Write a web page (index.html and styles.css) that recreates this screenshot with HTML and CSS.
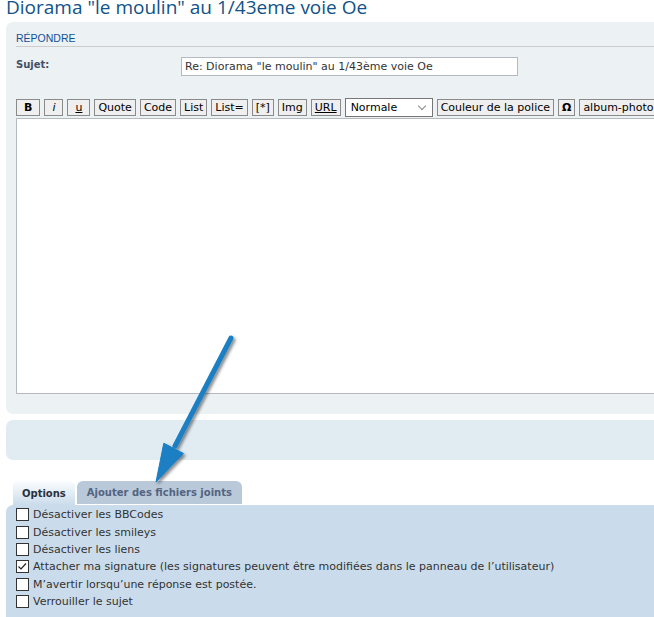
FILE: index.html
```html
<!DOCTYPE html>
<html lang="fr">
<head>
    <meta charset="UTF-8">
    <title>Répondre</title>
    <link rel="stylesheet" href="styles.css">
</head>
<body>
<div class="page">
    <h2 class="topic-title">Diorama "le moulin" au 1/43eme voie Oe</h2>

    <div class="panel post-panel">
        <h3>Répondre</h3>
        <div class="subject-row">
            <label for="subject">Sujet:</label>
            <input type="text" id="subject" class="inputbox" value="Re: Diorama &quot;le moulin&quot; au 1/43ème voie Oe">
        </div>
        <div class="toolbar">
            <button class="bb bb-b">B</button>
            <button class="bb bb-i">i</button>
            <button class="bb bb-u">u</button>
            <button class="bb">Quote</button>
            <button class="bb">Code</button>
            <button class="bb">List</button>
            <button class="bb">List=</button>
            <button class="bb">[*]</button>
            <button class="bb">Img</button>
            <button class="bb bb-url">URL</button>
            <div class="size-select">Normale<span class="chev"></span></div>
            <button class="bb">Couleur de la police</button>
            <button class="bb bb-omega">Ω</button>
            <button class="bb">album-photo</button>
        </div>
        <textarea class="message"></textarea>
    </div>

    <div class="panel submit-panel"></div>

    <ul class="tabs">
        <li class="tab active">Options</li>
        <li class="tab">Ajouter des fichiers joints</li>
    </ul>
    <div class="options-panel">
        <div class="opt"><span class="check"></span>Désactiver les BBCodes</div>
        <div class="opt"><span class="check"></span>Désactiver les smileys</div>
        <div class="opt"><span class="check"></span>Désactiver les liens</div>
        <div class="opt"><span class="check"><svg viewBox="0 0 13 13" width="13" height="13"><path d="M2.5 6.5 L5 9 L10 3.5" fill="none" stroke="#222" stroke-width="1.2"/></svg></span>Attacher ma signature (les signatures peuvent être modifiées dans le panneau de l’utilisateur)</div>
        <div class="opt"><span class="check"></span>M’avertir lorsqu’une réponse est postée.</div>
        <div class="opt"><span class="check"></span>Verrouiller le sujet</div>
    </div>
</div>

<!-- annotation arrow drawn over the page -->
<svg class="arrow" width="654" height="617" viewBox="0 0 654 617">
    <defs>
        <filter id="shadow" x="-50%" y="-50%" width="200%" height="200%">
            <feDropShadow dx="2" dy="2" stdDeviation="1.8" flood-color="#000" flood-opacity="0.45"/>
        </filter>
    </defs>
    <g filter="url(#shadow)" fill="#1a7fc4" stroke="#1a7fc4">
        <line x1="231" y1="338" x2="175" y2="446" stroke-width="5" stroke-linecap="round"/>
        <polygon points="163.8,443.2 183.4,453.4 156,482" stroke-width="1" stroke-linejoin="round"/>
    </g>
</svg>
</body>
</html>
```

FILE: styles.css
```css
* {
    box-sizing: border-box;
}

html, body {
    margin: 0;
    padding: 0;
    overflow: hidden;
    background: #fff;
}

body {
    font-family: "DejaVu Sans", Verdana, sans-serif;
    font-size: 11px;
    color: #333;
}

.page {
    width: 720px;
    padding-left: 6px;
}

/* Topic title */
.topic-title {
    font-family: "Open Sans", sans-serif;
    font-size: 19px;
    font-weight: normal;
    color: #105289;
    margin: -4px 0 0 0;
    height: 26px;
    line-height: 22px;
}

/* Panels */
.panel {
    background: #ecf1f3;
    border-radius: 7px;
    padding: 10px 10px 20px;
    margin-bottom: 6px;
}

.post-panel h3 {
    font-family: "Liberation Sans", Arial, sans-serif;
    font-size: 10.5px;
    font-weight: normal;
    line-height: 13px;
    text-transform: uppercase;
    color: #115098;
    border-bottom: 1px solid #ccc;
    padding-bottom: 1px;
    margin: 0 0 10px;
}

.subject-row {
    display: flex;
    align-items: flex-start;
    height: 19px;
}

.subject-row label {
    width: 165px;
    font-size: 10px;
    font-weight: bold;
    color: #425067;
    padding-top: 2px;
}

.inputbox {
    width: 337px;
    height: 19px;
    border: 1px solid #b4bac0;
    font-family: "DejaVu Sans", Verdana, sans-serif;
    font-size: 11px;
    color: #333;
    padding: 0 3px;
}

.toolbar {
    display: flex;
    gap: 4px;
    margin-top: 22px;
    height: 19px;
    align-items: center;
    white-space: nowrap;
}

.bb {
    height: 17px;
    padding: 0 3px;
    background: #efefef;
    border: 1px solid #8a8a8a;
    font-family: "DejaVu Sans", Verdana, sans-serif;
    font-size: 11px;
    color: #000;
    line-height: 15px;
}

.bb-b {
    font-weight: bold;
    padding: 0 7px;
}

.bb-i {
    font-style: italic;
    padding: 0 7px;
}

.bb-u {
    text-decoration: underline;
    padding: 0 7px;
}

.bb-url {
    text-decoration: underline;
}

.bb-omega {
    font-weight: bold;
}

.size-select {
    position: relative;
    width: 88px;
    height: 19px;
    border: 1px solid #767676;
    background: #fff;
    padding: 2px 0 0 5px;
    color: #000;
}

.size-select .chev {
    position: absolute;
    right: 7px;
    top: 4px;
    width: 6px;
    height: 6px;
    border-right: 1px solid #888;
    border-bottom: 1px solid #888;
    transform: rotate(45deg);
}

.message {
    display: block;
    width: 100%;
    height: 276px;
    margin-top: 1px;
    border: 1px solid #b4bac0;
    background: #fff;
    resize: none;
}

.submit-panel {
    background: #e1ebf2;
    height: 40px;
    padding: 0;
}

/* Tabs */
.tabs {
    list-style: none;
    display: flex;
    align-items: flex-end;
    gap: 2px;
    margin: 20px 0 0 7px;
    padding: 0;
    height: 25px;
}

.tab {
    height: 23px;
    padding: 0 10px;
    border-radius: 6px 6px 0 0;
    background: #b9c9d9;
    color: #536482;
    font-size: 10px;
    font-weight: bold;
    line-height: 23px;
    margin-bottom: 1px;
}

.tab.active {
    height: 25px;
    padding: 0 9px;
    margin-bottom: 0;
    background: linear-gradient(#fdfeff, #cadceb);
    color: #28313f;
    line-height: 27px;
}

.options-panel {
    background: #cadceb;
    border-radius: 7px 0 0 0;
    padding: 1px 10px 20px;
}

.opt {
    display: flex;
    align-items: center;
    height: 17.4px;
    color: #333;
}

.check {
    width: 13px;
    height: 13px;
    border: 1px solid #333;
    background: #fff;
    margin-right: 4px;
    display: flex;
}

.check svg {
    margin: -1px;
}

/* Annotation */
.arrow {
    position: absolute;
    top: 0;
    left: 0;
    pointer-events: none;
}
```
